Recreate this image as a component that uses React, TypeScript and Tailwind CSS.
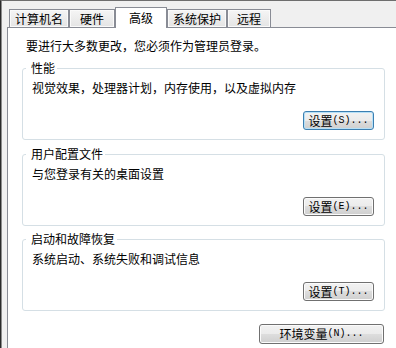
import React from "react";

const tabs = [
  { name: "计算机名", w: "w-[60px]" },
  { name: "硬件", w: "w-[46px]" },
  { name: "高级", w: "w-[52px]", active: true },
  { name: "系统保护", w: "w-[60px]" },
  { name: "远程", w: "w-[44px]" },
];

const groups = [
  { title: "性能", desc: "视觉效果，处理器计划，内存使用，以及虚拟内存", key: "S", focused: true, mt: "mt-[6px]" },
  { title: "用户配置文件", desc: "与您登录有关的桌面设置", key: "E", mt: "mt-[6px]" },
  { title: "启动和故障恢复", desc: "系统启动、系统失败和调试信息", key: "T", mt: "mt-[5px]" },
];

const WinButton = ({ label, hotkey, focused, className }: { label: string; hotkey: string; focused?: boolean; className: string }) => (
  <button
    className={`flex items-center justify-center rounded-[3px] border text-[12px] leading-none text-black bg-[linear-gradient(#f2f2f2,#ebebeb_50%,#dddddd_50%,#cfcfcf)] ${
      focused
        ? "border-[#3c7fb1] shadow-[inset_0_0_0_1px_#b6e0f7]"
        : "border-[#707070] shadow-[inset_0_0_0_1px_#fbfbfb]"
    } ${className}`}
  >
    <span>{label}</span>
    <span className="font-['Liberation_Mono',monospace] text-[10px]">({hotkey})...</span>
  </button>
);

export default function App() {
  return (
    <div className="w-[396px] h-[348px] overflow-hidden flex flex-col bg-[#f0f0f0] border-t border-t-[#6e6e6e] border-l border-l-[#2a2a2a] shadow-[inset_1px_0_0_#8c8c8c] pl-[6px] pt-[6px] font-['Noto_Sans_CJK_SC',sans-serif] text-[12px] leading-[16px] text-black">
      {/* tab strip */}
      <div className="relative z-10 flex items-end h-[21px] pl-[2px]">
        {tabs.map((t) =>
          t.active ? (
            <div
              key={t.name}
              className={`${t.w} h-[21px] flex items-center justify-center border border-b-0 border-[#898c95] bg-white`}
            >
              {t.name}
            </div>
          ) : (
            <div
              key={t.name}
              className={`${t.w} h-[19px] flex items-center justify-center border border-[#898c95] bg-[linear-gradient(#f5f5f5,#e4e4e4)] shadow-[inset_0_0_0_1px_#fafafa]`}
            >
              {t.name}
            </div>
          )
        )}
      </div>

      {/* tab page */}
      <div className="-mt-px flex-1 border-t border-l border-[#898c95] bg-white px-[14px] pt-[10px]">
        <p className="ml-[4px]">要进行大多数更改，您必须作为管理员登录。</p>

        {groups.map((g) => (
          <fieldset key={g.title} className={`${g.mt} w-[363px] rounded-[3px] border border-[#d5dfe5]`}>
            <legend className="ml-[3px] pl-[5px] pr-[2px]">{g.title}</legend>
            <p className="mt-[4px] pl-[9px]">{g.desc}</p>
            <div className="mt-[15px] mb-[9px] flex justify-end pr-[10px]">
              <WinButton label="设置" hotkey={g.key} focused={g.focused} className="w-[71px] h-[19px]" />
            </div>
          </fieldset>
        ))}

        <div className="mt-[13px] w-[363px] flex justify-end pr-[1px]">
          <WinButton label="环境变量" hotkey="N" className="w-[125px] h-[20px]" />
        </div>
      </div>
    </div>
  );
}
